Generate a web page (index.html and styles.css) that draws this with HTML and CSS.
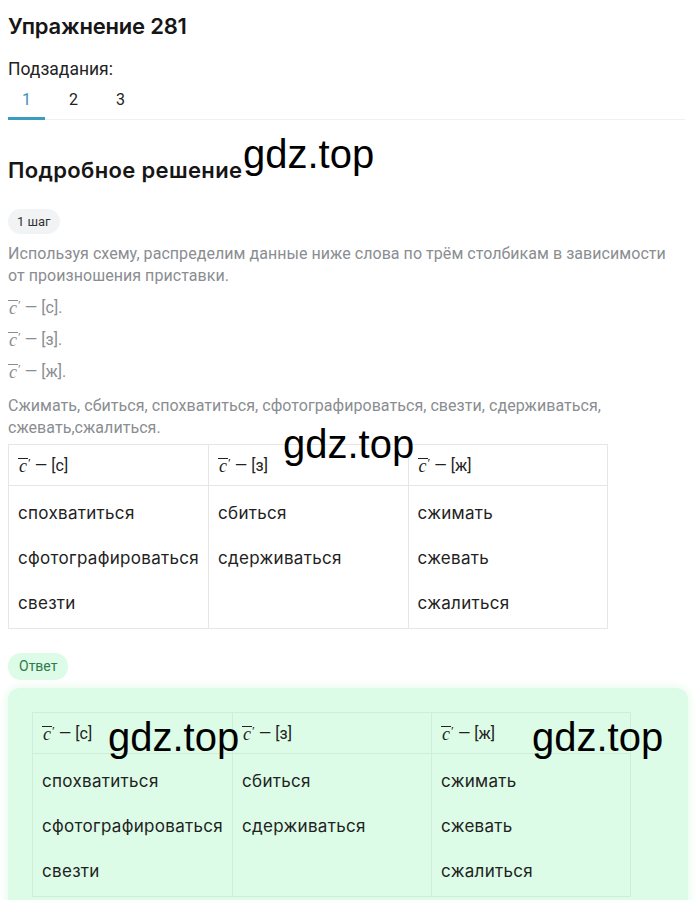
FILE: index.html
```html
<!DOCTYPE html>
<html lang="ru">
<head>
<meta charset="utf-8">
<link rel="stylesheet" href="styles.css">
</head>
<body>
<div class="page">
  <h1 class="title">Упражнение 281</h1>
  <div class="sub-label">Подзадания:</div>
  <div class="tabs">
    <span class="tab active">1</span>
    <span class="tab">2</span>
    <span class="tab">3</span>
  </div>

  <div class="solution-head">
    <h2 class="h2">Подробное решение</h2>
    <span class="wm wm-1">gdz.top</span>
  </div>

  <span class="pill">1 шаг</span>
  <p class="para">Используя схему, распределим данные ниже слова по трём столбикам в зависимости от произношения приставки.</p>
  <p class="line"><span class="m"><span class="ov">c</span><span class="pr">′</span></span> — [с].</p>
  <p class="line"><span class="m"><span class="ov">c</span><span class="pr">′</span></span> — [з].</p>
  <p class="line"><span class="m"><span class="ov">c</span><span class="pr">′</span></span> — [ж].</p>
  <p class="para words">Сжимать, сбиться, спохватиться, сфотографироваться, свезти, сдерживаться, сжевать,сжалиться.</p>

  <div class="table-wrap">
    <span class="wm wm-2">gdz.top</span>
    <table class="tbl">
      <tr class="hd">
        <td><span class="m"><span class="ov">c</span><span class="pr">′</span></span> — [с]</td>
        <td><span class="m"><span class="ov">c</span><span class="pr">′</span></span> — [з]</td>
        <td><span class="m"><span class="ov">c</span><span class="pr">′</span></span> — [ж]</td>
      </tr>
      <tr class="body">
        <td><div>спохватиться</div><div>сфотографироваться</div><div>свезти</div></td>
        <td><div>сбиться</div><div>сдерживаться</div></td>
        <td><div>сжимать</div><div>сжевать</div><div>сжалиться</div></td>
      </tr>
    </table>
  </div>

  <span class="pill green">Ответ</span>
  <div class="answer">
    <span class="wm wm-3">gdz.top</span>
    <span class="wm wm-4">gdz.top</span>
    <table class="tbl">
      <tr class="hd">
        <td><span class="m"><span class="ov">c</span><span class="pr">′</span></span> — [с]</td>
        <td><span class="m"><span class="ov">c</span><span class="pr">′</span></span> — [з]</td>
        <td><span class="m"><span class="ov">c</span><span class="pr">′</span></span> — [ж]</td>
      </tr>
      <tr class="body">
        <td><div>спохватиться</div><div>сфотографироваться</div><div>свезти</div></td>
        <td><div>сбиться</div><div>сдерживаться</div></td>
        <td><div>сжимать</div><div>сжевать</div><div>сжалиться</div></td>
      </tr>
    </table>
  </div>
</div>
</body>
</html>
```

FILE: styles.css
```css
html, body { margin: 0; padding: 0; background: #fff; }
body { font-family: Inter, "Noto Sans", sans-serif; color: #111; overflow: hidden; }
.page { padding: 0 8px; width: 677px; }

.title { margin: 0; padding-top: 12px; font-size: 22px; font-weight: 600; line-height: 28px; letter-spacing: -0.2px; color: #161616; }
.sub-label { margin-top: 19px; font-size: 17.5px; line-height: 20px; color: #222; font-family: Roboto, sans-serif; }
.tabs { display: flex; gap: 10px; margin-top: 9px; border-bottom: 1px solid #eef0f2; width: 677px; }
.tab { width: 37px; text-align: center; font-family: Roboto, sans-serif; font-size: 16px; line-height: 20px; padding: 2px 0 9px; color: #222; }
.tab.active { color: #3a8fb0; border-bottom: 3px solid #3a9dc0; margin-bottom: -1px; padding-bottom: 7px; }

.solution-head { position: relative; margin-top: 35px; height: 30px; }
.h2 { margin: 0; font-size: 22px; font-weight: 600; line-height: 30px; color: #161616; letter-spacing: 0.35px; }
.wm { position: absolute; font-family: "Liberation Sans", Arial, sans-serif; font-size: 40px; line-height: 46px; color: #000; white-space: nowrap; }
.wm-1 { left: 235px; top: -24px; }

.pill { display: inline-block; margin-top: 24px; padding: 0 9px; height: 25px; line-height: 25px; border-radius: 13px; background: #f2f3f5; font-family: Roboto, sans-serif; font-size: 13px; color: #333; }
.para { margin: 9px 0 0; font-family: Roboto, sans-serif; font-size: 16px; line-height: 22px; color: #8a8d91; letter-spacing: 0.05px; }
.line { margin: 10px 0 0; font-family: Roboto, sans-serif; font-size: 16px; line-height: 22px; height: 22px; color: #8a8d91; }
.words { margin-top: 12px; }

.m { font-family: "Liberation Serif", "DejaVu Serif", serif; font-style: italic; font-size: 18px; line-height: 16px; display: inline-block; vertical-align: -1px; }
.ov { border-top: 1px solid currentColor; display: inline-block; line-height: 14px; padding: 0 1px; }
.pr { font-style: normal; font-size: 13px; vertical-align: 5px; }

.table-wrap { position: relative; margin-top: 5px; }
.wm-2 { left: 275px; top: -23px; }
.tbl { border-collapse: collapse; width: 600px; font-size: 17px; letter-spacing: 0.3px; color: #222; }
.tbl td { border: 1px solid #e6e6e6; width: 33.33%; padding: 0 9px; vertical-align: top; }
.tbl .hd td { height: 40px; vertical-align: middle; font-family: Roboto, sans-serif; font-size: 16px; letter-spacing: 0; }
.tbl .body td { padding-top: 5px; padding-bottom: 2px; }
.tbl .body td div { line-height: 45px; height: 45px; white-space: nowrap; }

.pill.green { margin-top: 24px; background: #dcfce7; color: #2f7a4a; font-size: 14px; padding: 0 11px; height: 27px; line-height: 27px; }

.answer { position: relative; margin-top: 8px; background: #dcfce7; border-radius: 12px; padding: 24px 24px 24px; width: 632px; box-shadow: 0 0 8px 2px #e9fbee; }
.answer .tbl td { border-color: #cfeed9; }
.answer .tbl { width: 599px; }
.wm-3 { left: 100px; top: 26px; }
.wm-4 { left: 524px; top: 26px; }
```
